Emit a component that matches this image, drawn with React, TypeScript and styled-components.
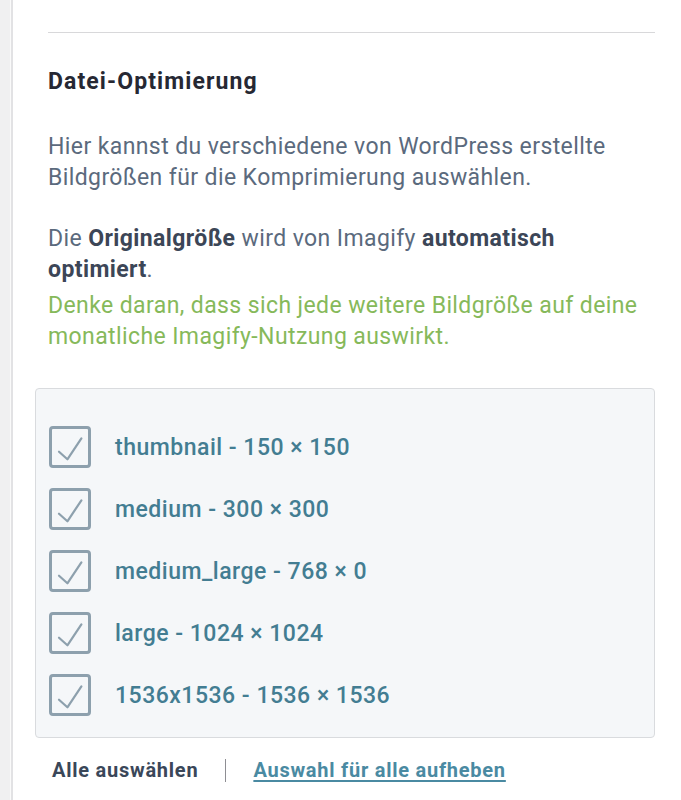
import React from "react";
import styled, { createGlobalStyle } from "styled-components";

const Global = createGlobalStyle`
  html, body { margin: 0; padding: 0; background: #fff; }
  body { font-family: Roboto, "Noto Sans", sans-serif; -webkit-font-smoothing: antialiased; }
`;

const Page = styled.div`
  display: flex;
  min-height: 800px;
`;

const Rail = styled.div`
  width: 10px;
  flex: 0 0 10px;
  background: #f0f0f1;
  border-right: 1px solid #fafafa;
  box-shadow: 2px 0 0 #e2e2e4;
`;

const Main = styled.div`
  flex: 1;
  padding: 32px 26px 0 21px;
  margin-left: 3px;
`;

const Rule = styled.hr`
  margin: 0 0 0 13px;
  border: 0;
  border-top: 1px solid #d8d8da;
`;

const Section = styled.div`
  padding-left: 13px;
`;

const Heading = styled.h3`
  margin: 33px 0 0;
  font-size: 23px;
  line-height: 32px;
  font-weight: 700;
  letter-spacing: 1.1px;
  color: #262833;
`;

const Para = styled.p`
  margin: 33px 0 0;
  font-size: 23px;
  line-height: 31px;
  letter-spacing: 0.4px;
  color: #5b6a7d;
  & + & { margin-top: 30px; }
`;

const Line = styled.span`
  display: block;
`;

const Strong = styled.strong`
  font-weight: 700;
  color: #3c4657;
`;

const Note = styled.span`
  display: block;
  margin-top: 5px;
  color: #86b95a;
`;

const Box = styled.div`
  margin-top: 36px;
  background: #f5f7f9;
  border: 1px solid #d9dbde;
  border-radius: 4px;
  padding: 37px 13px 21px;
  display: flex;
  flex-direction: column;
  gap: 20px;
`;

const Row = styled.label`
  display: flex;
  align-items: center;
  gap: 24px;
  height: 42px;
  cursor: pointer;
`;

const Check = styled.span`
  box-sizing: border-box;
  width: 42px;
  height: 42px;
  flex: 0 0 42px;
  border: 3px solid #8da0ad;
  border-radius: 4px;
  display: flex;
  align-items: center;
  justify-content: center;
  background: #f5f7f9;
`;

const Label = styled.span`
  font-size: 23px;
  font-weight: 500;
  letter-spacing: 0.5px;
  color: #437d92;
`;

const Actions = styled.div`
  display: flex;
  align-items: center;
  padding: 20px 0 0 17px;
`;

const Plain = styled.button`
  border: 0;
  background: none;
  padding: 0;
  font: inherit;
  font-size: 20px;
  font-weight: 700;
  letter-spacing: 0.75px;
  color: #3a4759;
  cursor: pointer;
`;

const Sep = styled.span`
  width: 1px;
  height: 23px;
  background: #8e8e93;
  margin: 0 27px;
`;

const Link = styled.a`
  font-size: 20px;
  font-weight: 700;
  letter-spacing: 0.75px;
  color: #4a8aa2;
  text-decoration: underline;
  text-underline-offset: 3px;
  text-decoration-thickness: 1.5px;
  cursor: pointer;
`;

const sizes = [
  "thumbnail - 150 × 150",
  "medium - 300 × 300",
  "medium_large - 768 × 0",
  "large - 1024 × 1024",
  "1536x1536 - 1536 × 1536",
];

const Tick = () => (
  <svg width="36" height="36" viewBox="0 0 36 36" fill="none">
    <path d="M7 22.7 L15.4 30.3 L29.4 9.3" stroke="#8da0ad" strokeWidth="2.2" strokeLinecap="round" strokeLinejoin="round" />
  </svg>
);

export default function App() {
  return (
    <Page>
      <Global />
      <Rail />
      <Main>
        <Rule />
        <Section>
          <Heading>Datei-Optimierung</Heading>
          <Para>Hier kannst du verschiedene von WordPress erstellte Bildgrößen für die Komprimierung auswählen.</Para>
          <Para>
            <Line>
              Die <Strong>Originalgröße</Strong> wird von Imagify <Strong>automatisch</Strong>
            </Line>
            <Line>
              <Strong>optimiert</Strong>.
            </Line>
            <Note>Denke daran, dass sich jede weitere Bildgröße auf deine monatliche Imagify-Nutzung auswirkt.</Note>
          </Para>
        </Section>
        <Box>
          {sizes.map((s) => (
            <Row key={s}>
              <Check><Tick /></Check>
              <Label>{s}</Label>
            </Row>
          ))}
        </Box>
        <Actions>
          <Plain>Alle auswählen</Plain>
          <Sep />
          <Link>Auswahl für alle aufheben</Link>
        </Actions>
      </Main>
    </Page>
  );
}
